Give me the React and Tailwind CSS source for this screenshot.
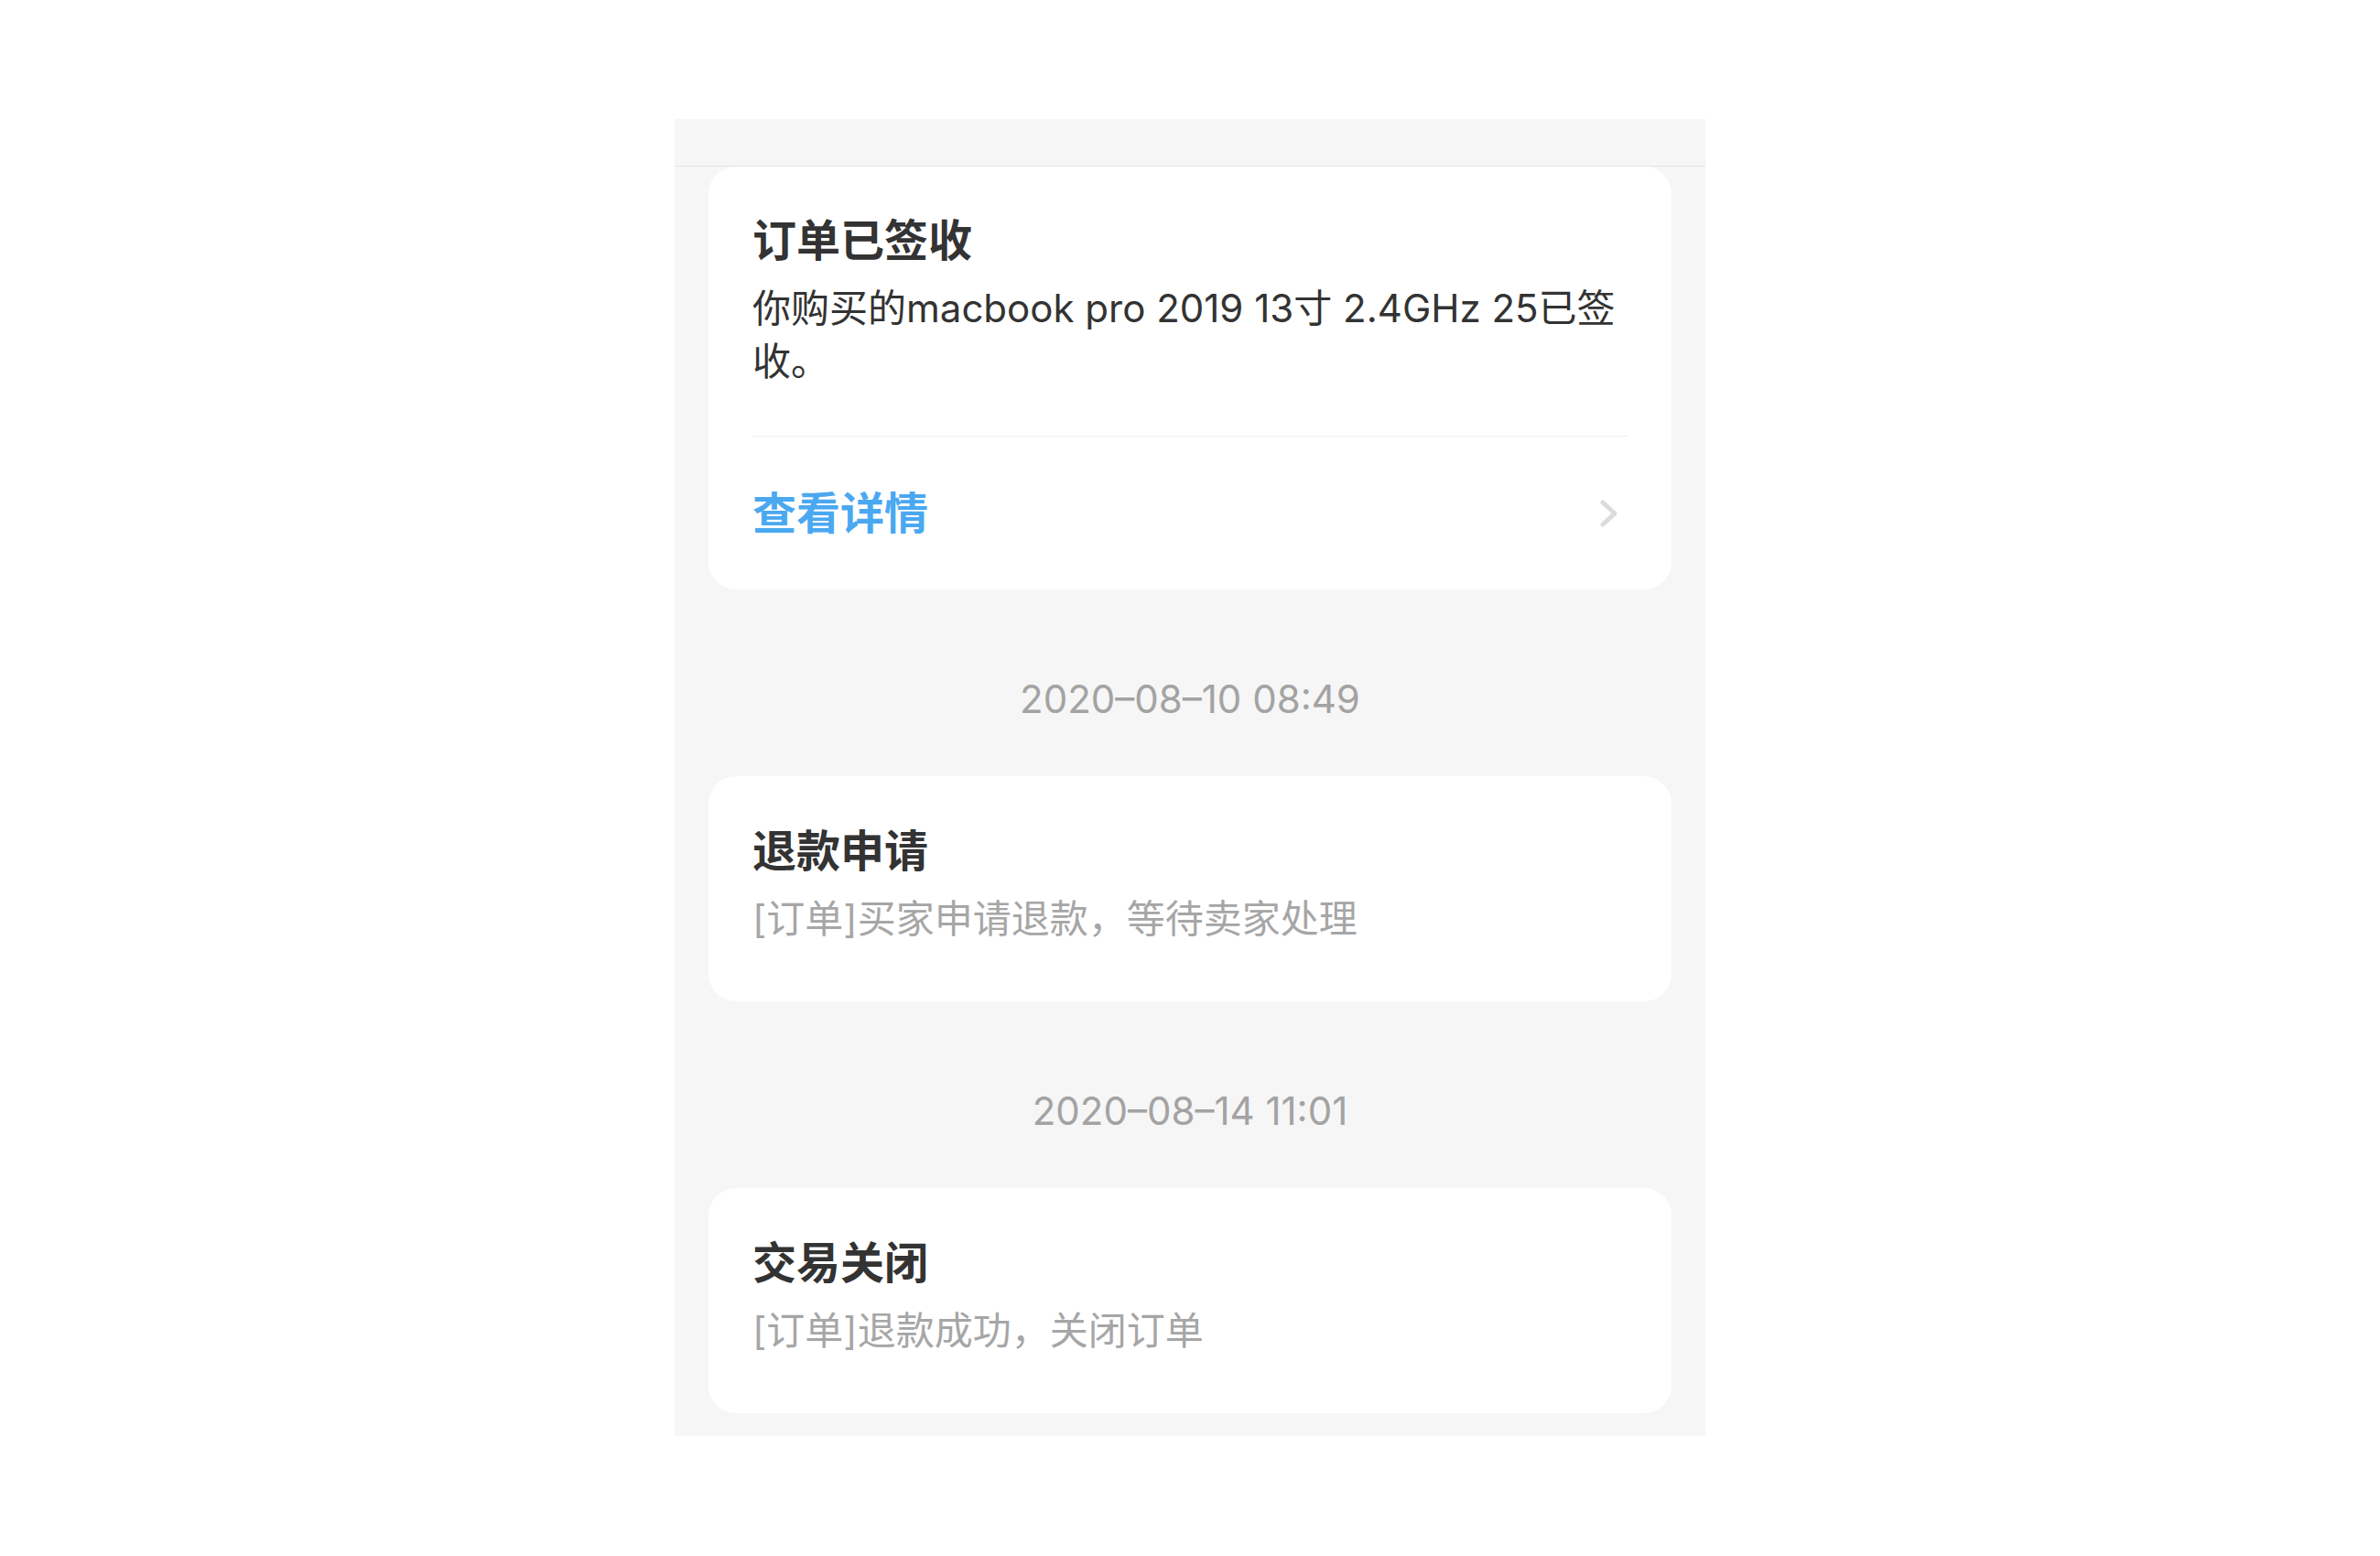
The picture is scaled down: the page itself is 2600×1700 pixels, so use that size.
import React from "react";

const timeline = [
  { time: "2020–08–10 08:49", title: "退款申请", desc: "[订单]买家申请退款，等待卖家处理" },
  { time: "2020–08–14 11:01", title: "交易关闭", desc: "[订单]退款成功，关闭订单" },
];

function Chevron() {
  return (
    <svg width="20" height="32" viewBox="0 0 20 32" fill="none">
      <path d="M3 4 L16 16 L3 28" stroke="#dcdcdc" strokeWidth="5" strokeLinecap="round" strokeLinejoin="round" />
    </svg>
  );
}

export default function App() {
  return (
    <div className="min-h-screen bg-white flex items-start justify-center pt-[130px] font-['Inter','Noto_Sans_CJK_SC',sans-serif]">
      <div className="w-[1126px] bg-[#f6f6f6] pb-[25px]">
        {/* top bar */}
        <div className="h-[52px] border-b border-[#e4e4e4]" />

        {/* signed card */}
        <div className="mx-[37px] rounded-[30px] bg-white">
          <div className="mx-[48px] pt-[47px] pb-[52px] border-b border-[#ececec]">
            <h3 className="text-[48px] leading-[67px] font-semibold text-[#333]">订单已签收</h3>
            <p className="mt-[12px] text-[42px] leading-[58px] text-[#333]">
              你购买的macbook pro 2019 13寸 2.4GHz 25已签收。
            </p>
          </div>
          <div className="h-[167px] pl-[48px] pr-[58px] flex items-center justify-between">
            <span className="text-[48px] font-semibold text-[#4aa8f1]">查看详情</span>
            <Chevron />
          </div>
        </div>

        {timeline.map((item, index) => (
          <div key={index}>
            <div className="h-[204px] pt-[99px] text-center text-[42px] leading-[42px] text-[#a3a3a3]">
              {item.time}
            </div>
            <div className="mx-[37px] rounded-[30px] bg-white px-[48px] pt-[48px] pb-[61px]">
              <h3 className="text-[48px] leading-[67px] font-semibold text-[#333]">{item.title}</h3>
              <p className="mt-[12px] text-[42px] leading-[58px] text-[#a6a6a6]">{item.desc}</p>
            </div>
          </div>
        ))}
      </div>
    </div>
  );
}
